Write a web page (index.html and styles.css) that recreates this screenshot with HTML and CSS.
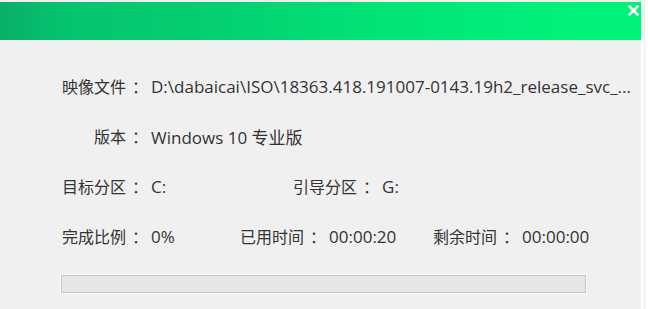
FILE: index.html
```html
<!DOCTYPE html>
<html lang="zh-CN">
<head>
<meta charset="utf-8">
<title>安装</title>
<link rel="stylesheet" href="styles.css">
</head>
<body>
<div class="window">
  <div class="titlebar">
    <button class="close" aria-label="关闭">
      <svg width="11" height="11" viewBox="0 0 11 11"><path d="M1.5 1.5 L9.5 9.5 M9.5 1.5 L1.5 9.5" stroke="#fff" stroke-width="2.6" stroke-linecap="square"/></svg>
    </button>
  </div>
  <div class="content">
    <div class="row">
      <span class="label right">映像文件<span class="colon">：</span></span>
      <span class="value">D:\dabaicai\ISO\18363.418.191007-0143.19h2_release_svc_...</span>
    </div>
    <div class="row">
      <span class="label right">版本<span class="colon">：</span></span>
      <span class="value">Windows 10 专业版</span>
    </div>
    <div class="row">
      <div class="group g-target">
        <span class="label">目标分区<span class="colon">：</span></span>
        <span class="value">C:</span>
      </div>
      <div class="group">
        <span class="label">引导分区<span class="colon">：</span></span>
        <span class="value">G:</span>
      </div>
    </div>
    <div class="row">
      <div class="group g-percent">
        <span class="label">完成比例<span class="colon">：</span></span>
        <span class="value">0%</span>
      </div>
      <div class="group g-used">
        <span class="label">已用时间<span class="colon">：</span></span>
        <span class="value">00:00:20</span>
      </div>
      <div class="group">
        <span class="label">剩余时间<span class="colon">：</span></span>
        <span class="value">00:00:00</span>
      </div>
    </div>
    <div class="progress"><div class="progress-fill"></div></div>
  </div>
</div>
</body>
</html>
```
FILE: styles.css
```css
html, body {
  margin: 0;
  padding: 0;
  background: #ffffff;
}
body {
  width: 648px;
  height: 309px;
  overflow: hidden;
  font-family: "Open Sans", "Noto Sans CJK SC", sans-serif;
  font-size: 16px;
  color: #333333;
}
.window {
  width: 641px;
  height: 309px;
  background: #f0f0f0;
  box-shadow: 3px 0 0 #ffffff, 4px 0 0 #ececec;
  display: flex;
  flex-direction: column;
}
.titlebar {
  height: 38px;
  margin-top: 2px;
  background: linear-gradient(90deg, #0aaf68 0%, #05c36f 10%, #04d072 35%, #01e476 60%, #00f07a 85%, #00f27a 100%);
  border-bottom: 2px solid #e4f6ec;
  position: relative;
}
.close {
  position: absolute;
  top: 1px;
  right: 1px;
  width: 14px;
  height: 14px;
  padding: 0;
  border: 0;
  background: transparent;
  display: flex;
  align-items: center;
  justify-content: center;
}
.content {
  padding: 19px 0 0 62px;
  display: flex;
  flex-direction: column;
}
.row {
  height: 50px;
  display: flex;
  align-items: center;
  white-space: nowrap;
}
.group {
  display: flex;
  align-items: center;
}
.g-target { width: 231px; }
.g-percent { width: 178px; }
.g-used { width: 193px; }
.label {
  font-family: "Noto Sans CJK SC", sans-serif;
  font-size: 16px;
  color: #333333;
  margin-right: 3px;
}
.label.right {
  width: 86px;
  text-align: right;
  margin-left: 0;
  margin-right: 3px;
}
.colon {
  padding-left: 6px;
}
.value {
  font-family: "Open Sans", "Noto Sans CJK SC", sans-serif;
  font-size: 17px;
  color: #333333;
}
.progress {
  margin-top: 14px;
  margin-left: -1px;
  width: 525px;
  height: 18px;
  box-sizing: border-box;
  border: 1px solid #c6c6c6;
  outline: 1px solid #fafafa;
  background: #e6e6e6;
}
.progress-fill {
  width: 0;
  height: 100%;
}
```
